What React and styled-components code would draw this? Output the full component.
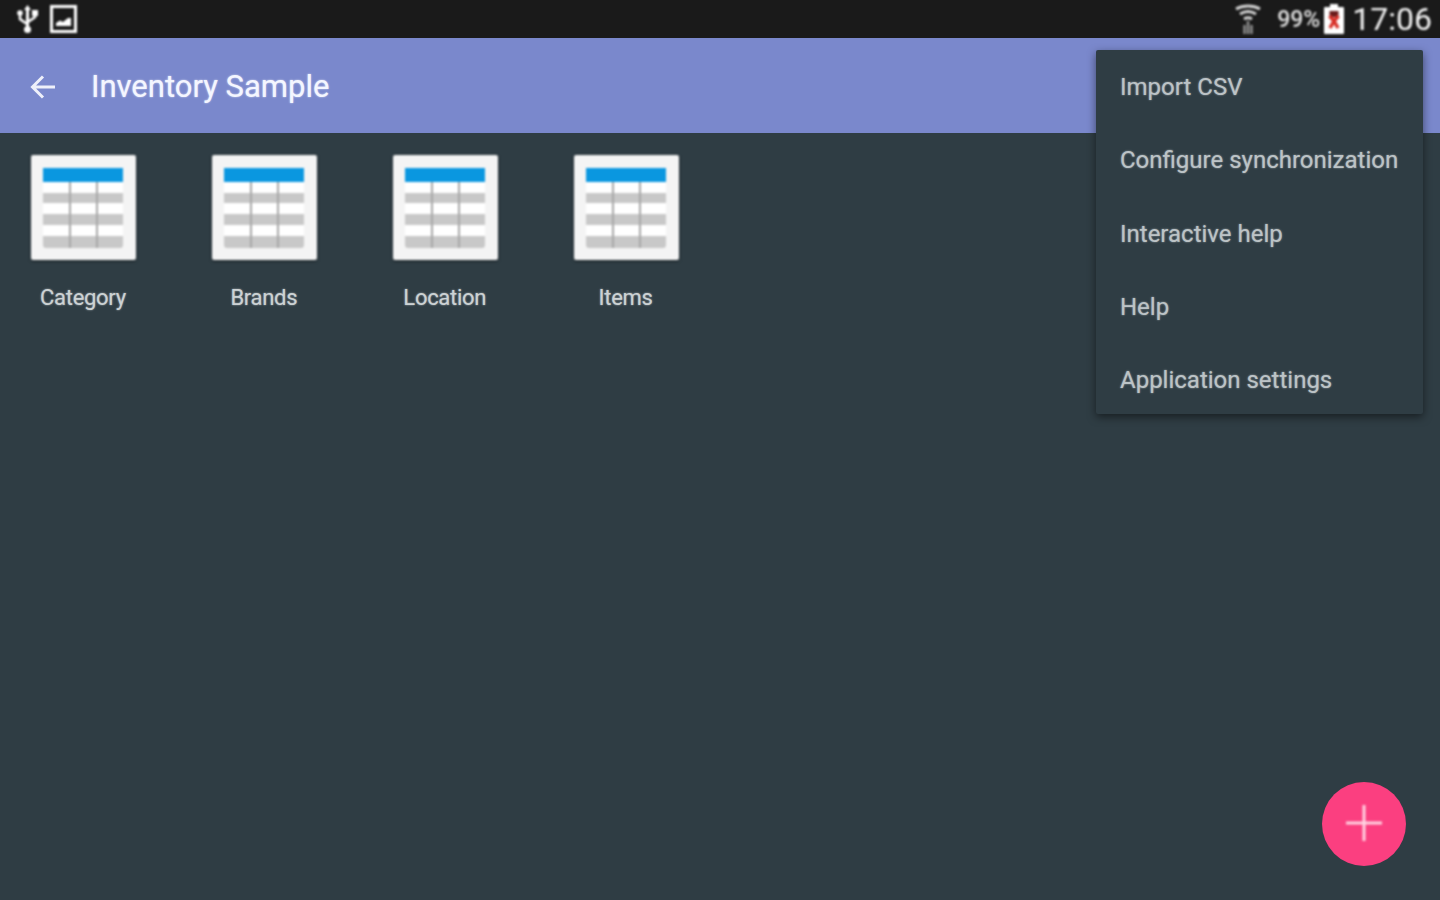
import React from "react";
import styled, { createGlobalStyle } from "styled-components";

const Global = createGlobalStyle`
  * { box-sizing: border-box; }
  html, body { margin: 0; height: 100%; background: #2f3d44; }
  body { font-family: Roboto, "Liberation Sans", sans-serif; overflow: hidden; }
`;

const Page = styled.div`
  position: relative;
  height: 900px;
  display: flex;
  flex-direction: column;
  background: #2f3d44;
`;

const StatusBar = styled.div`
  height: 38px;
  flex: none;
  background: #1a1a1a;
  display: flex;
  align-items: center;
  justify-content: space-between;
  padding: 0 8px 0 17px;
  color: #e6e6e6;
`;
const StatusGroup = styled.div`
  display: flex;
  align-items: center;
  gap: ${(props) => props.gap || 0}px;
  filter: blur(0.8px);
`;
const Percent = styled.span`
  font-size: 23px;
  font-weight: 500;
  color: #e0e0e0;
  margin: 0 4px 0 16px;
`;
const Clock = styled.span`
  font-size: 32px;
  font-weight: 400;
  color: #f4f4f4;
  margin-left: 8px;
`;

const AppBar = styled.div`
  height: 95px;
  flex: none;
  background: #7a88cc;
  display: flex;
  align-items: center;
  padding: 2px 0 0 30px;
  color: #f4f6ff;
`;
const Title = styled.div`
  font-size: 31px;
  margin-left: 35px;
  text-shadow: 0 0 2px rgba(244, 246, 255, 0.8);
`;

const Grid = styled.div`
  flex: 1;
  display: flex;
  align-items: flex-start;
  gap: 76px;
  padding: 22px 0 0 31px;
`;
const Tile = styled.div`
  width: 104.900px;
  display: flex;
  flex-direction: column;
  align-items: center;
`;
const Card = styled.div`
  width: 105px;
  height: 105px;
  flex: none;
  background: #f4f4f4;
  border-radius: 2px;
  box-shadow: 0 1px 3px rgba(0, 0, 0, 0.5);
  display: flex;
  align-items: center;
  justify-content: center;
  filter: blur(0.8px);
`;
const Label = styled.div`
  margin: 25px 1px 0 0;
  font-size: 22px;
  line-height: 26px;
  letter-spacing: -0.3px;
  white-space: nowrap;
  color: #ccd2d4;
  text-shadow: 0 0 2px rgba(204, 210, 212, 0.8);
`;

const Menu = styled.div`
  position: absolute;
  left: 1096px;
  top: 50px;
  width: 327px;
  height: 364px;
  padding-top: 3px;
  background: #2f3d44;
  border-radius: 2px;
  box-shadow: 0 3px 8px rgba(0, 0, 0, 0.5);
  display: flex;
  flex-direction: column;
  justify-content: center;
`;
const MenuItem = styled.div`
  height: 73.250px;
  flex: none;
  display: flex;
  align-items: center;
  padding-left: 24px;
  font-size: 24px;
  white-space: nowrap;
  color: #bcc3c6;
  text-shadow: 0 0 2px rgba(188, 195, 198, 0.8);
`;

const Fab = styled.div`
  position: absolute;
  left: 1322px;
  top: 782px;
  width: 84px;
  height: 84px;
  padding-bottom: 3px;
  border-radius: 50%;
  background: #fb3f80;
  display: flex;
  align-items: center;
  justify-content: center;
`;
const FabGlyph = styled.div`
  display: flex;
  filter: blur(0.8px);
`;

const UsbIcon = () => (
  <svg width="21" height="28" viewBox="0 0 21 28" fill="#ffffff" stroke="#ffffff">
    <path d="M10.500 0l3.500 5h-7z" stroke="none" />
    <path d="M10.500 4v20" strokeWidth="3" fill="none" />
    <path d="M3 9v5l7 5M18 9v3l-7 5" strokeWidth="2.500" fill="none" />
    <circle cx="3" cy="8" r="2.800" stroke="none" />
    <rect x="15" y="5" width="6" height="6" stroke="none" />
    <circle cx="10.500" cy="24.500" r="3.500" stroke="none" />
  </svg>
);

const PictureIcon = () => (
  <svg width="27" height="28" viewBox="0 0 27 28">
    <rect x="1.500" y="1.500" width="24" height="25" fill="#1a1a1a" stroke="#ffffff" strokeWidth="3" />
    <path d="M6 21v-3l4-2.500 3 1.500 5-4 3 0v8z" fill="#ffffff" />
  </svg>
);

const WifiIcon = () => (
  <svg width="26" height="30" viewBox="0 0 26 30" fill="none">
    <path d="M1 5c7-4 17-4 24 0" stroke="#d4d4d4" strokeWidth="3" />
    <path d="M5 10c5-3 11-3 16 0" stroke="#d4d4d4" strokeWidth="3" />
    <path d="M9 15c2.500-1.500 5.500-1.500 8 0" stroke="#d4d4d4" strokeWidth="3" />
    <path d="M13 17v13M9.500 30v-9M16.500 30v-9" stroke="#8e8e8e" strokeWidth="2.500" />
  </svg>
);

const BatteryIcon = () => (
  <svg width="20" height="30" viewBox="0 0 20 30">
    <path d="M6 0h8v3h5a1 1 0 0 1 1 1v25a1 1 0 0 1-1 1H1a1 1 0 0 1-1-1V4a1 1 0 0 1 1-1h5z" fill="#ffffff" />
    <rect x="5.500" y="7" width="9" height="6" fill="#6a1c1c" />
    <path d="M5.500 12l4.500 5 4.500-5M6 24l4-7 4 7" fill="none" stroke="#d83028" strokeWidth="3.500" />
  </svg>
);

const BackIcon = () => (
  <svg width="26" height="26" viewBox="0 0 26 26" fill="none" stroke="#eef0fa" strokeWidth="3">
    <path d="M25 13H3M13 2.500L2.500 13 13 23.500" />
  </svg>
);

const PlusIcon = () => (
  <svg width="36" height="36" viewBox="0 0 36 36" stroke="#ffd4e2" strokeWidth="3">
    <path d="M18 0v36M0 18h36" />
  </svg>
);

const rowTops = [14, 35, 57];

const TableIcon = () => (
  <svg width="80" height="80" viewBox="0 0 80 80">
    <rect width="80" height="80" rx="3" fill="#c8c8c8" />
    {rowTops.map((y) => (
      <rect key={y} y={y} width="80" height="11" fill="#ffffff" />
    ))}
    <rect width="80" height="14" fill="#0a97e0" />
    <path d="M27 14v66M54 14v66" stroke="#a8a8a8" strokeWidth="2" />
  </svg>
);

const tiles = ["Category", "Brands", "Location", "Items"];
const menuItems = [
  "Import CSV",
  "Configure synchronization",
  "Interactive help",
  "Help",
  "Application settings",
];

export default function App() {
  return (
    <Page>
      <Global />
      <StatusBar>
        <StatusGroup gap={12}>
          <UsbIcon />
          <PictureIcon />
        </StatusGroup>
        <StatusGroup>
          <WifiIcon />
          <Percent>99%</Percent>
          <BatteryIcon />
          <Clock>17:06</Clock>
        </StatusGroup>
      </StatusBar>
      <AppBar>
        <BackIcon />
        <Title>Inventory Sample</Title>
      </AppBar>
      <Grid>
        {tiles.map((name) => (
          <Tile key={name}>
            <Card>
              <TableIcon />
            </Card>
            <Label>{name}</Label>
          </Tile>
        ))}
      </Grid>
      <Menu>
        {menuItems.map((item) => (
          <MenuItem key={item}>{item}</MenuItem>
        ))}
      </Menu>
      <Fab>
        <FabGlyph>
          <PlusIcon />
        </FabGlyph>
      </Fab>
    </Page>
  );
}
